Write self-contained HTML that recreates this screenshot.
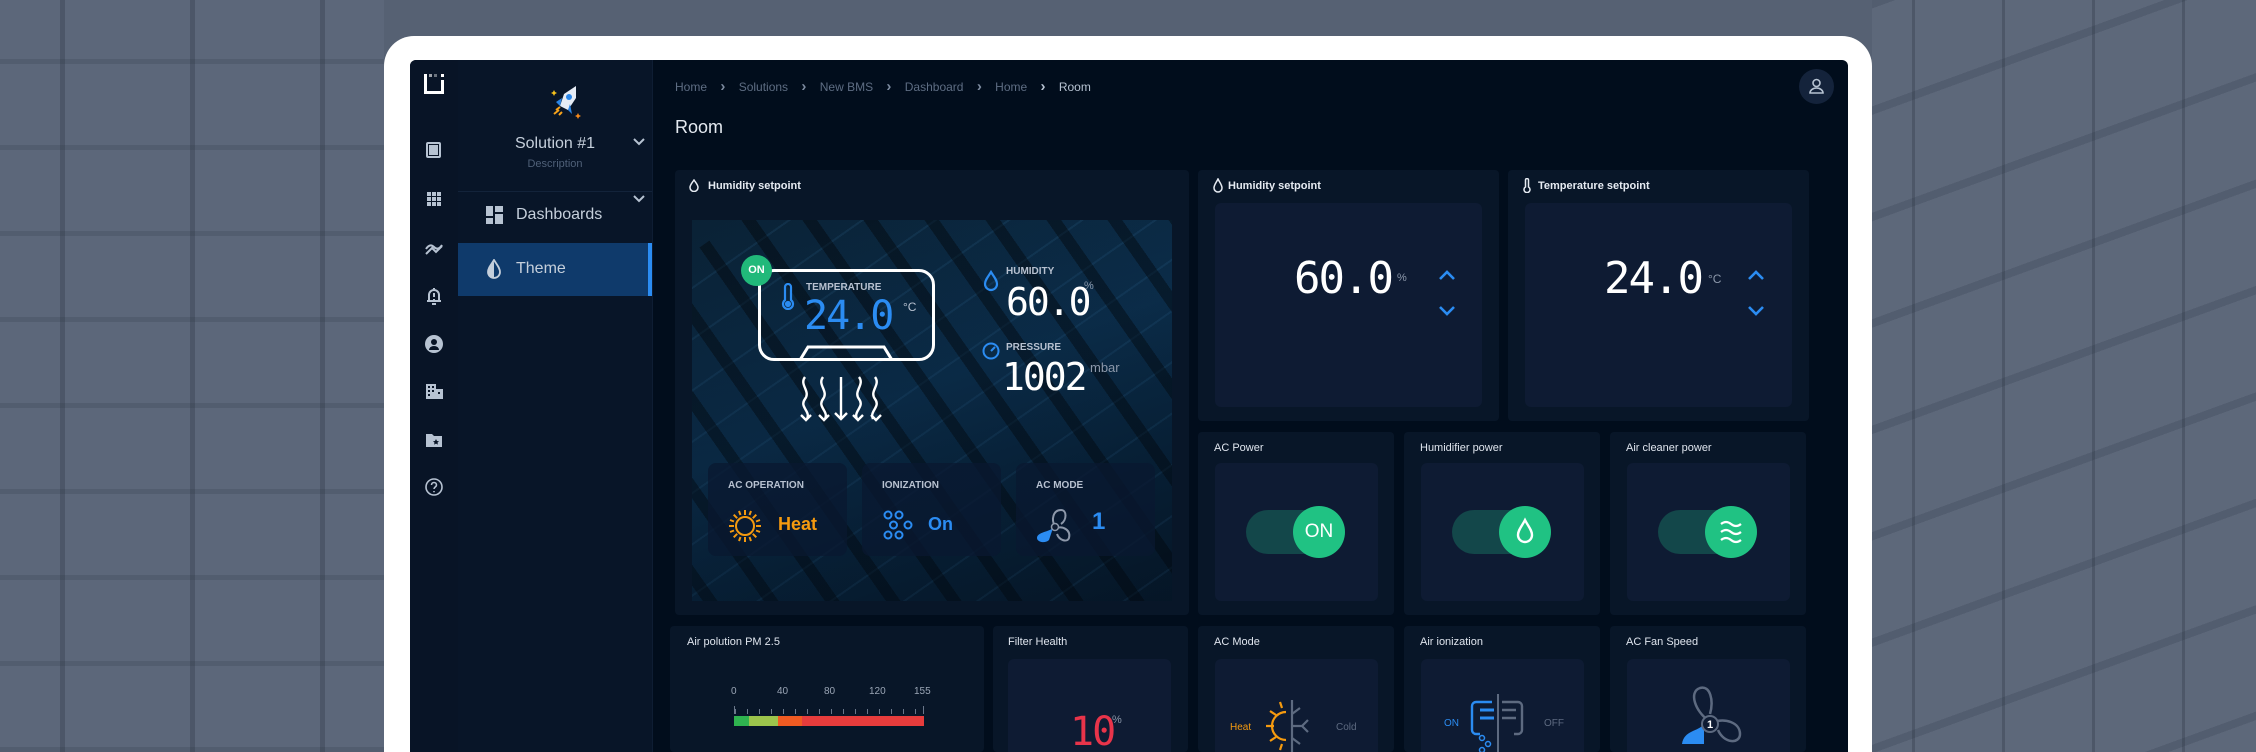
<!DOCTYPE html>
<html><head><meta charset="utf-8"><style>
*{margin:0;padding:0;box-sizing:border-box}
html,body{width:2256px;height:752px;overflow:hidden}
body{position:relative;font-family:"Liberation Sans",sans-serif;background:#566173;}
.bg{position:absolute;top:0;height:752px}
.a{position:absolute}
.frame{position:absolute;left:384px;top:36px;width:1488px;height:716px;background:#fff;border-radius:30px 30px 0 0}
.app{position:absolute;left:410px;top:60px;width:1438px;height:692px;background:#010d1c;border-radius:6px 6px 0 0;overflow:hidden}
.rail{position:absolute;left:0;top:0;width:48px;height:692px;background:#081426}
.side{position:absolute;left:48px;top:0;width:195px;height:692px;background:#081528;border-right:1px solid #0e1d33}
.card{position:absolute;background:#081628;border-radius:4px}
.inner{position:absolute;background:#0e1b33;border-radius:6px}
.t{position:absolute;color:#e6ebf2;font-size:11px;font-weight:bold;white-space:nowrap}
.lbl{position:absolute;color:#b7c1d0;font-size:11px;font-weight:bold;white-space:nowrap}
.seg{position:absolute;font-family:"DejaVu Sans Mono","Liberation Mono",monospace;white-space:nowrap;letter-spacing:-2px}
.ri{position:absolute;left:14px;width:20px;height:20px}
</style></head><body>
<div class="bg" style="left:0;width:384px;background:repeating-linear-gradient(0deg,#525d6f 0 5px,#5c677a 5px 86px)"></div>
<div class="bg" style="left:0;width:384px;background:repeating-linear-gradient(90deg,transparent 0 60px,rgba(40,48,62,.3) 60px 65px,transparent 65px 130px)"></div>
<div class="bg" style="left:1872px;width:384px;background:repeating-linear-gradient(160deg,#525d6f 0 8px,#5d687a 8px 100px)"></div>
<div class="bg" style="left:1872px;width:384px;background:repeating-linear-gradient(90deg,transparent 0 40px,rgba(40,48,62,.3) 40px 43px,transparent 43px 90px)"></div>

<div class="frame"></div>
<div class="app">
 <div class="rail">
  <svg class="a" style="left:14px;top:14px" width="20" height="20" viewBox="0 0 20 20" fill="#fff"><rect x="0" y="0" width="3" height="20"/><rect x="0" y="17" width="20" height="3"/><rect x="17" y="6" width="3" height="14"/><rect x="5" y="0" width="3" height="3" opacity=".6"/><rect x="10" y="0" width="3" height="3" opacity=".4"/><rect x="17" y="0" width="3" height="3"/></svg>
  <svg class="ri" style="top:80px" viewBox="0 0 20 20" fill="none" stroke="#b7c3d2" stroke-width="2"><rect x="3" y="3" width="13" height="14" rx="1"/><rect x="6" y="6" width="3" height="3" fill="#b7c3d2"/><rect x="10" y="6" width="3" height="8" fill="#b7c3d2"/><rect x="6" y="10" width="3" height="4" fill="#b7c3d2"/></svg>
  <svg class="ri" style="top:129px" viewBox="0 0 20 20" fill="#b7c3d2"><rect x="3" y="3" width="4" height="4"/><rect x="8" y="3" width="4" height="4"/><rect x="13" y="3" width="4" height="4"/><rect x="3" y="8" width="4" height="4"/><rect x="8" y="8" width="4" height="4"/><rect x="13" y="8" width="4" height="4"/><rect x="3" y="13" width="4" height="4"/><rect x="8" y="13" width="4" height="4"/><rect x="13" y="13" width="4" height="4"/></svg>
  <svg class="ri" style="top:179px" viewBox="0 0 20 20" fill="none" stroke="#b7c3d2" stroke-width="2"><path d="M2 10 Q6 4 10 8 T18 6 M2 15 L8 9 L12 13 L18 7"/></svg>
  <svg class="ri" style="top:226px" viewBox="0 0 20 20" fill="none" stroke="#b7c3d2" stroke-width="2"><path d="M5 15V9a5 5 0 0110 0v6H3h14M10 3V2M8 18h4M10 7v4M10 13v1"/></svg>
  <svg class="ri" style="top:274px" viewBox="0 0 20 20"><circle cx="10" cy="10" r="9" fill="#b7c3d2"/><circle cx="10" cy="8" r="3" fill="#081426"/><path d="M5 16a5 4 0 0110 0" fill="#081426"/></svg>
  <svg class="ri" style="top:321px" viewBox="0 0 20 20" fill="#b7c3d2"><rect x="2" y="3" width="10" height="15"/><rect x="12" y="8" width="7" height="10"/><g fill="#081426"><rect x="4" y="5" width="2" height="2"/><rect x="8" y="5" width="2" height="2"/><rect x="4" y="9" width="2" height="2"/><rect x="8" y="9" width="2" height="2"/><rect x="4" y="13" width="2" height="2"/><rect x="14" y="11" width="2" height="2"/></g></svg>
  <svg class="ri" style="top:370px" viewBox="0 0 20 20"><path d="M2 4h6l2 2h8v11H2z" fill="#b7c3d2"/><path d="M12 9l1 2 2 .3-1.5 1.3.4 2-1.9-1-1.9 1 .4-2L9 11.3l2-.3z" fill="#081426"/></svg>
  <svg class="ri" style="top:417px" viewBox="0 0 20 20" fill="none" stroke="#b7c3d2" stroke-width="1.6"><circle cx="10" cy="10" r="8"/><path d="M7.5 8a2.5 2.5 0 115 0c0 2-2.5 2-2.5 4M10 14v1.2"/></svg>
 </div>
 <div class="side">
  <svg class="a" style="left:88px;top:20px" width="40" height="40" viewBox="0 0 40 40"><path d="M30 6 L18 14 L14 26 L22 30 L30 18Z" fill="#e6ecf5"/><circle cx="23" cy="17" r="3" fill="#2a86e8"/><path d="M14 26 L10 22 L16 18Z" fill="#2a86e8"/><path d="M22 30 L26 34 L24 24Z" fill="#2a86e8"/><path d="M10 30l4-3M8 34l5-4M13 35l3-3" stroke="#f6a21b" stroke-width="2"/><path d="M8 10l1 2 2 1-2 1-1 2-1-2-2-1 2-1z" fill="#f6c21b"/><path d="M32 33l1 2 2 1-2 1-1 2-1-2-2-1 2-1z" fill="#f68a1b"/></svg>
  <div class="a" style="left:0;width:194px;top:75px;text-align:center;color:#c5cfdb;font-size:16px">Solution #1</div>
  <div class="a" style="left:0;width:194px;top:98px;text-align:center;color:#4f6078;font-size:11px">Description</div>
  <svg class="a" style="left:174px;top:77px" width="14" height="10" viewBox="0 0 14 10" fill="none" stroke="#b7c3d2" stroke-width="2"><path d="M2 2l5 5 5-5"/></svg>
  <div class="a" style="left:0;top:131px;width:194px;height:1px;background:#13233a"></div>
  <svg class="a" style="left:174px;top:134px" width="14" height="10" viewBox="0 0 14 10" fill="none" stroke="#b7c3d2" stroke-width="2"><path d="M2 2l5 5 5-5"/></svg>
  <svg class="a" style="left:28px;top:146px" width="18" height="18" viewBox="0 0 18 18" fill="#b7c3d2"><rect x="0" y="0" width="7" height="10"/><rect x="0" y="12" width="7" height="6"/><rect x="9" y="0" width="8" height="6"/><rect x="9" y="8" width="8" height="10"/></svg>
  <div class="a" style="left:58px;top:146px;color:#c5cfdb;font-size:16px">Dashboards</div>
  <div class="a" style="left:0;top:183px;width:194px;height:53px;background:#0f3a6b;border-right:4px solid #2b8cf2"></div>
  <svg class="a" style="left:29px;top:199px" width="14" height="20" viewBox="0 0 14 20"><path d="M7 1C4 6 1 9 1 13a6 6 0 0012 0C13 9 10 6 7 1z" fill="none" stroke="#c5cfdb" stroke-width="1.8"/><path d="M7 3v16a6 6 0 01-6-6C1 9 4 6 7 3z" fill="#c5cfdb"/></svg>
  <div class="a" style="left:58px;top:200px;color:#c5cfdb;font-size:16px">Theme</div>
 </div>

 <div class="a" style="left:265px;top:18px;font-size:12px;color:#5e6d83;white-space:nowrap">Home &nbsp;&nbsp;&nbsp;<b style="color:#7d8ba0;font-size:15px">›</b>&nbsp;&nbsp;&nbsp; Solutions &nbsp;&nbsp;&nbsp;<b style="color:#7d8ba0;font-size:15px">›</b>&nbsp;&nbsp;&nbsp; New BMS &nbsp;&nbsp;&nbsp;<b style="color:#7d8ba0;font-size:15px">›</b>&nbsp;&nbsp;&nbsp; Dashboard &nbsp;&nbsp;&nbsp;<b style="color:#7d8ba0;font-size:15px">›</b>&nbsp;&nbsp;&nbsp; Home &nbsp;&nbsp;&nbsp;<b style="color:#b7c3d2;font-size:15px">›</b>&nbsp;&nbsp;&nbsp; <span style="color:#b7c3d2">Room</span></div>
 <div class="a" style="left:265px;top:57px;font-size:18px;color:#e4e9f0">Room</div>
 <div class="a" style="left:1389px;top:9px;width:35px;height:35px;border-radius:50%;background:#14233b"></div>
 <svg class="a" style="left:1397px;top:17px" width="19" height="19" viewBox="0 0 19 19" fill="none" stroke="#b7c3d2" stroke-width="1.6"><circle cx="9.5" cy="6" r="3.5"/><path d="M3 16a6.5 5 0 0113 0z"/></svg>
</div>

<div class="card" style="left:675px;top:170px;width:514px;height:445px"></div>
<svg class="a" style="left:689px;top:179px" width="10" height="13" viewBox="0 0 10 13" fill="none" stroke="#e6ebf2" stroke-width="1.5"><path d="M5 1C3 4 1 6 1 8.5a4 4 0 008 0C9 6 7 4 5 1z"/></svg>
<div class="t" style="left:708px;top:180px">Humidity setpoint</div>
<div class="a" style="left:692px;top:220px;width:480px;height:381px;overflow:hidden;background:linear-gradient(160deg,#0b2438 0%,#0c3150 45%,#08263f 70%,#061a2c 100%)">
 <div class="a" style="left:-100px;top:-100px;width:800px;height:700px;transform:rotate(-35deg);background:repeating-linear-gradient(90deg,transparent 0 38px,rgba(0,0,0,.4) 38px 50px),repeating-linear-gradient(0deg,transparent 0 40px,rgba(60,130,180,.15) 40px 42px)"></div>
 <div class="a" style="left:0;top:0;width:480px;height:381px;background:linear-gradient(180deg,rgba(4,14,28,.1),rgba(4,14,28,.35))"></div>
</div>
<div class="a" style="left:758px;top:269px;width:177px;height:92px;border:3px solid #fff;border-radius:16px"></div>
<svg class="a" style="left:758px;top:340px" width="177" height="22" viewBox="0 0 177 22" fill="none" stroke="#fff" stroke-width="3"><path d="M42 20 L50 7 H126 L134 20"/></svg>
<div class="a" style="left:741px;top:255px;width:31px;height:31px;border-radius:50%;background:#21b97a;color:#fff;font-size:11px;font-weight:bold;text-align:center;line-height:31px">ON</div>
<svg class="a" style="left:781px;top:283px" width="14" height="27" viewBox="0 0 14 27" fill="none" stroke="#2b8cf2" stroke-width="2.2"><path d="M4 17V4a3 3 0 016 0v13a5 5 0 11-6 0z"/><circle cx="7" cy="21" r="2" fill="#2b8cf2"/></svg>
<div class="lbl" style="left:806px;top:282px;font-size:10px">TEMPERATURE</div>
<div class="seg" style="left:804px;top:294px;font-size:40px;color:#2b8cf2;line-height:44px">24.0</div>
<div class="a" style="left:903px;top:300px;font-size:12px;color:#b7c1d0">°C</div>
<svg class="a" style="left:795px;top:375px" width="100" height="48" viewBox="0 0 100 48" fill="none" stroke="#fff" stroke-width="2.4"><path d="M10 2c-6 8 6 14 0 22s6 12 2 20M6 40l5 5 5-5"/><path d="M28 2c-6 8 6 14 0 22s6 12 2 20M24 40l5 5 5-5"/><path d="M46 2v42M40 38l6 6 6-6"/><path d="M64 2c6 8-6 14 0 22s-6 12-2 20M58 40l5 5 5-5"/><path d="M80 2c6 8-6 14 0 22s-6 12-2 20M76 40l5 5 5-5"/></svg>
<svg class="a" style="left:983px;top:270px" width="16" height="22" viewBox="0 0 16 22" fill="none" stroke="#2b8cf2" stroke-width="2.2"><path d="M8 2C5 7 2 10 2 14a6 6 0 0012 0C14 10 11 7 8 2z"/></svg>
<div class="lbl" style="left:1006px;top:266px;font-size:10px">HUMIDITY</div>
<div class="seg" style="left:1006px;top:280px;font-size:38px;color:#fff;line-height:44px">60.0</div>
<div class="a" style="left:1084px;top:280px;font-size:11px;color:#8c98aa">%</div>
<svg class="a" style="left:982px;top:342px" width="18" height="18" viewBox="0 0 18 18" fill="none" stroke="#2b8cf2" stroke-width="2"><circle cx="9" cy="9" r="7.5"/><path d="M9 9l4-4"/></svg>
<div class="lbl" style="left:1006px;top:342px;font-size:10px">PRESSURE</div>
<div class="seg" style="left:1002px;top:355px;font-size:38px;color:#fff;line-height:44px">1002</div>
<div class="a" style="left:1090px;top:360px;font-size:13px;color:#8c98aa">mbar</div>
<div class="a" style="left:708px;top:463px;width:139px;height:93px;background:rgba(10,24,48,.75);border-radius:8px"></div>
<div class="a" style="left:862px;top:463px;width:139px;height:93px;background:rgba(10,24,48,.75);border-radius:8px"></div>
<div class="a" style="left:1016px;top:463px;width:139px;height:93px;background:rgba(10,24,48,.75);border-radius:8px"></div>
<div class="lbl" style="left:728px;top:480px;font-size:10px">AC OPERATION</div>
<div class="lbl" style="left:882px;top:480px;font-size:10px">IONIZATION</div>
<div class="lbl" style="left:1036px;top:480px;font-size:10px">AC MODE</div>
<svg class="a" style="left:727px;top:508px" width="36" height="36" viewBox="0 0 36 36" fill="none" stroke="#f59a0f" stroke-width="2"><circle cx="18" cy="18" r="9"/><path d="M18 2v5M18 29v5M2 18h5M29 18h5M6.7 6.7l3.5 3.5M25.8 25.8l3.5 3.5M6.7 29.3l3.5-3.5M25.8 10.2l3.5-3.5M12 3l1.5 4M22.5 29l1.5 4M3 24l4-1.5M29 13.5l4-1.5M24 3l-1.5 4M13.5 29l-1.5 4M3 12l4 1.5M29 22.5l4 1.5"/></svg>
<div class="a" style="left:778px;top:514px;font-size:18px;font-weight:bold;color:#f59a0f">Heat</div>
<svg class="a" style="left:882px;top:510px" width="32" height="32" viewBox="0 0 32 32" fill="none" stroke="#2b8cf2" stroke-width="2"><circle cx="6" cy="5" r="3.5"/><circle cx="17" cy="5" r="3.5"/><circle cx="11.5" cy="15" r="3.5"/><circle cx="26" cy="15" r="3.5"/><circle cx="6" cy="25" r="3.5"/><circle cx="17" cy="25" r="3.5"/></svg>
<div class="a" style="left:928px;top:514px;font-size:18px;font-weight:bold;color:#2b8cf2">On</div>
<svg class="a" style="left:1035px;top:506px" width="40" height="38" viewBox="0 0 40 38"><path d="M20 20c-4-6-2-16 6-16 6 0 6 10 0 14M22 22c6-2 14 2 12 10-2 5-10 2-12-4" fill="none" stroke="#8d98aa" stroke-width="2"/><path d="M18 22c-4 4-16 4-16 10 0 4 8 6 12 2z" fill="#2b8cf2"/><circle cx="20" cy="21" r="3.5" fill="#0d1a30" stroke="#8d98aa" stroke-width="1.5"/></svg>
<div class="a" style="left:1092px;top:508px;font-size:24px;font-weight:bold;color:#2b8cf2">1</div>

<div class="card" style="left:1198px;top:170px;width:301px;height:251px"></div>
<div class="inner" style="left:1215px;top:203px;width:267px;height:204px"></div>
<svg class="a" style="left:1213px;top:178px" width="10" height="15" viewBox="0 0 10 15" fill="none" stroke="#e6ebf2" stroke-width="1.5"><path d="M5 1C3 5 1 7 1 10a4 4 0 008 0C9 7 7 5 5 1z"/></svg>
<div class="t" style="left:1228px;top:180px">Humidity setpoint</div>
<div class="seg" style="left:1294px;top:254px;font-size:44px;color:#fff;line-height:50px">60.0</div>
<div class="a" style="left:1397px;top:272px;font-size:11px;color:#8c98aa">%</div>
<svg class="a" style="left:1437px;top:268px" width="20" height="50" viewBox="0 0 20 50" fill="none" stroke="#2b8cf2" stroke-width="2.6"><path d="M3 11l7-7 7 7M3 39l7 7 7-7"/></svg>
<div class="card" style="left:1508px;top:170px;width:301px;height:251px"></div>
<div class="inner" style="left:1525px;top:203px;width:267px;height:204px"></div>
<svg class="a" style="left:1523px;top:178px" width="8" height="15" viewBox="0 0 8 15" fill="none" stroke="#e6ebf2" stroke-width="1.5"><path d="M2.5 9V2a1.5 1.5 0 013 0v7a3 3 0 11-3 0z"/></svg>
<div class="t" style="left:1538px;top:180px">Temperature setpoint</div>
<div class="seg" style="left:1604px;top:254px;font-size:44px;color:#fff;line-height:50px">24.0</div>
<div class="a" style="left:1708px;top:272px;font-size:12px;color:#8c98aa">°C</div>
<svg class="a" style="left:1746px;top:268px" width="20" height="50" viewBox="0 0 20 50" fill="none" stroke="#2b8cf2" stroke-width="2.6"><path d="M3 11l7-7 7 7M3 39l7 7 7-7"/></svg>

<div class="card" style="left:1198px;top:432px;width:196px;height:183px"></div>
<div class="card" style="left:1404px;top:432px;width:196px;height:183px"></div>
<div class="card" style="left:1610px;top:432px;width:196px;height:183px"></div>
<div class="t" style="left:1214px;top:442px;font-weight:normal;color:#dfe5ee">AC Power</div>
<div class="t" style="left:1420px;top:442px;font-weight:normal;color:#dfe5ee">Humidifier power</div>
<div class="t" style="left:1626px;top:442px;font-weight:normal;color:#dfe5ee">Air cleaner power</div>
<div class="inner" style="left:1215px;top:463px;width:163px;height:138px"></div>
<div class="inner" style="left:1421px;top:463px;width:163px;height:138px"></div>
<div class="inner" style="left:1627px;top:463px;width:163px;height:138px"></div>
<div class="a" style="left:1246px;top:510px;width:98px;height:44px;border-radius:22px;background:#13474a"></div>
<div class="a" style="left:1293px;top:506px;width:52px;height:52px;border-radius:50%;background:#20c283;color:#fff;font-size:19px;text-align:center;line-height:52px">ON</div>
<div class="a" style="left:1452px;top:510px;width:98px;height:44px;border-radius:22px;background:#13474a"></div>
<div class="a" style="left:1499px;top:506px;width:52px;height:52px;border-radius:50%;background:#20c283"></div>
<svg class="a" style="left:1515px;top:517px" width="20" height="30" viewBox="0 0 20 30" fill="none" stroke="#fff" stroke-width="2.4"><path d="M10 3C7 9 3 13 3 18a7 7 0 0014 0C17 13 13 9 10 3z"/></svg>
<div class="a" style="left:1658px;top:510px;width:98px;height:44px;border-radius:22px;background:#13474a"></div>
<div class="a" style="left:1705px;top:506px;width:52px;height:52px;border-radius:50%;background:#20c283"></div>
<svg class="a" style="left:1718px;top:518px" width="26" height="28" viewBox="0 0 26 28" fill="none" stroke="#fff" stroke-width="2.2"><path d="M3 6q5-4 10 0t10 0M3 14q5-4 10 0t10 0M3 22q5-4 10 0t10 0"/></svg>

<div class="card" style="left:670px;top:626px;width:314px;height:126px"></div>
<div class="card" style="left:993px;top:626px;width:195px;height:126px"></div>
<div class="card" style="left:1198px;top:626px;width:196px;height:126px"></div>
<div class="card" style="left:1404px;top:626px;width:196px;height:126px"></div>
<div class="card" style="left:1610px;top:626px;width:196px;height:126px"></div>
<div class="t" style="left:687px;top:636px;font-weight:normal;color:#dfe5ee">Air polution PM 2.5</div>
<div class="t" style="left:1008px;top:636px;font-weight:normal;color:#dfe5ee">Filter Health</div>
<div class="t" style="left:1214px;top:636px;font-weight:normal;color:#dfe5ee">AC Mode</div>
<div class="t" style="left:1420px;top:636px;font-weight:normal;color:#dfe5ee">Air ionization</div>
<div class="t" style="left:1626px;top:636px;font-weight:normal;color:#dfe5ee">AC Fan Speed</div>
<div class="inner" style="left:1008px;top:659px;width:163px;height:93px;border-radius:6px 6px 0 0"></div>
<div class="inner" style="left:1215px;top:659px;width:163px;height:93px;border-radius:6px 6px 0 0"></div>
<div class="inner" style="left:1421px;top:659px;width:163px;height:93px;border-radius:6px 6px 0 0"></div>
<div class="inner" style="left:1627px;top:659px;width:163px;height:93px;border-radius:6px 6px 0 0"></div>
<div class="a" style="left:728px;top:686px;width:210px;font-size:10px;color:#9aa5b5">
 <span class="a" style="left:3px">0</span><span class="a" style="left:49px">40</span><span class="a" style="left:96px">80</span><span class="a" style="left:141px">120</span><span class="a" style="left:186px">155</span></div>
<div class="a" style="left:734px;top:706px;width:190px;height:8px;border-left:1px solid #6a778a;border-right:1px solid #6a778a;background:repeating-linear-gradient(90deg,#6a778a 0 1px,transparent 1px 12px) bottom/100% 5px no-repeat"></div>
<div class="a" style="left:734px;top:716px;width:190px;height:10px;background:linear-gradient(90deg,#2fb34f 0 15px,#9cc44c 15px 44px,#f05b22 44px 68px,#e63c3c 68px)"></div>
<div class="seg" style="left:1070px;top:710px;font-size:40px;color:#e8344a;line-height:44px">10</div>
<div class="a" style="left:1112px;top:714px;font-size:11px;color:#8c98aa">%</div>
<div class="a" style="left:1230px;top:722px;font-size:10px;color:#f59a0f">Heat</div>
<svg class="a" style="left:1260px;top:700px" width="70" height="52" viewBox="0 0 70 52" fill="none" stroke-width="2.2"><path d="M26 12a14 14 0 000 28" stroke="#f59a0f"/><path d="M14 26H6M16 15l-6-4M16 37l-6 4M22 8l-2-6M22 44l-2 6" stroke="#f59a0f"/><path d="M32 0v52M32 14l8-6M32 26h10l6-6M42 26l6 6M32 38l8 6" stroke="#5d6a80"/></svg>
<div class="a" style="left:1336px;top:722px;font-size:10px;color:#5d6a80">Cold</div>
<div class="a" style="left:1444px;top:718px;font-size:10px;color:#2b8cf2">ON</div>
<svg class="a" style="left:1468px;top:694px" width="64" height="58" viewBox="0 0 64 58"><path d="M24 8H8a4 4 0 00-4 4v24a4 4 0 004 4h4" fill="none" stroke="#2b8cf2" stroke-width="2.4"/><path d="M12 16h14M12 24h14" stroke="#2b8cf2" stroke-width="3"/><path d="M30 0v58" stroke="#5d6a80" stroke-width="2"/><path d="M34 8h16a4 4 0 014 4v24a4 4 0 01-4 4h-4M34 16h14M34 24h14" fill="none" stroke="#5d6a80" stroke-width="2.4"/><circle cx="14" cy="44" r="2.5" fill="none" stroke="#2b8cf2" stroke-width="1.5"/><circle cx="20" cy="50" r="2.5" fill="none" stroke="#2b8cf2" stroke-width="1.5"/><circle cx="14" cy="56" r="2.5" fill="none" stroke="#2b8cf2" stroke-width="1.5"/></svg>
<div class="a" style="left:1544px;top:718px;font-size:10px;color:#5d6a80">OFF</div>
<svg class="a" style="left:1660px;top:684px" width="100" height="68" viewBox="0 0 100 68"><path d="M48 36C36 28 28 8 40 4c10-3 14 12 10 26M54 38c10-4 26 0 26 12 0 10-16 10-22-4" fill="none" stroke="#5d6a80" stroke-width="2.5"/><path d="M44 40c-6 8-20 6-22 20h22z" fill="#2b8cf2"/><circle cx="50" cy="40" r="8" fill="#0e1b33" stroke="#5d6a80" stroke-width="2"/><text x="50" y="44" fill="#fff" font-size="11" font-weight="bold" text-anchor="middle" font-family="Liberation Sans">1</text></svg>
</body></html>
